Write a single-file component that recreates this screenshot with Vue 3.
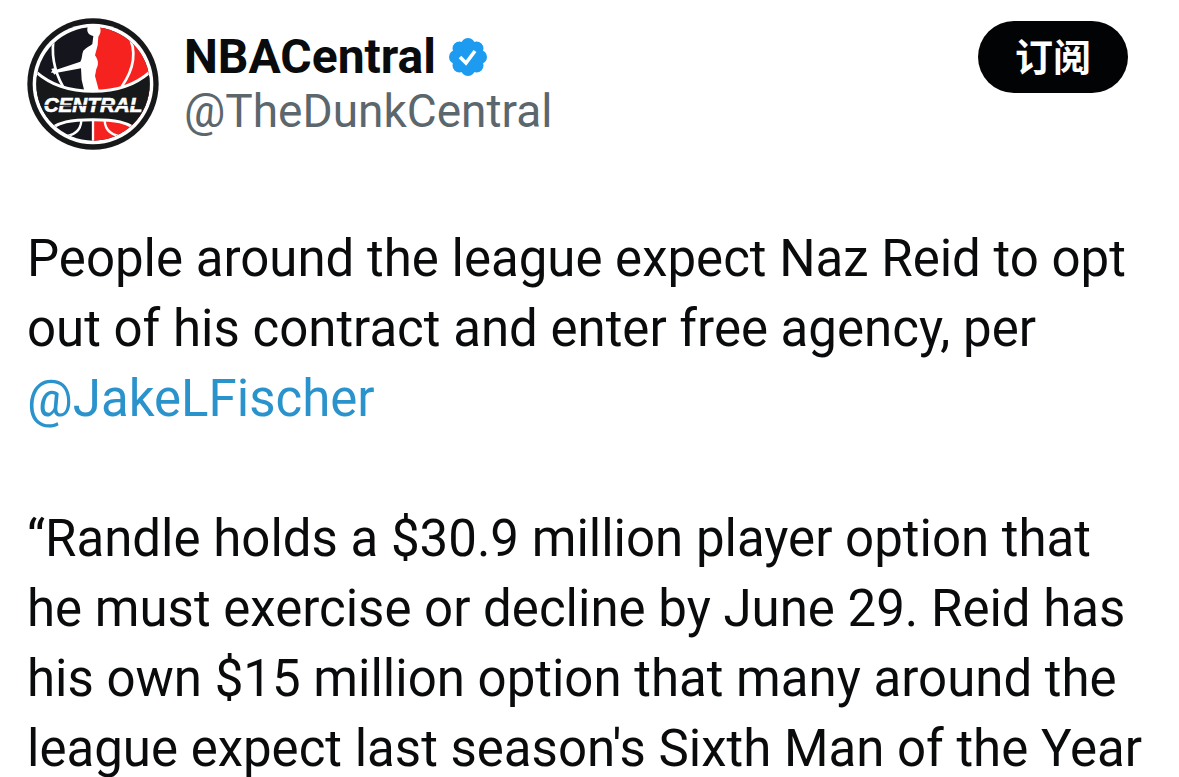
<template>
  <article class="post">
    <header class="post-header">
      <a class="avatar" href="#" :aria-label="author.name">
        <svg viewBox="0 0 396 396" aria-hidden="true">
          <defs>
            <clipPath id="ball">
              <circle cx="198" cy="198" r="170" />
            </clipPath>
          </defs>
          <circle cx="198" cy="198" r="197" fill="#17181a" />
          <circle cx="198" cy="198" r="181" fill="#fff" />
          <g clip-path="url(#ball)">
            <rect width="396" height="396" fill="#15161d" />
            <path d="M204 0H396V396H198V200Z" fill="#f5221f" />
            <!-- seams of the upper half -->
            <g fill="none" stroke="#fff" stroke-width="8">
              <path d="M82 50C72 100 78 152 108 206" />
              <path d="M304 50C330 100 322 152 284 206" />
            </g>
            <!-- name band -->
            <path
              d="M14 150C70 204 130 220 198 220S326 204 382 150L396 370C310 308 270 306 198 306S86 308 0 370Z"
              fill="#17181a"
            />
            <path
              d="M14 150C70 204 130 220 198 220S326 204 382 150"
              fill="none"
              stroke="#fff"
              stroke-width="9"
            />
            <path
              d="M50 350C90 308 140 305 198 305S306 308 346 350"
              fill="none"
              stroke="#fff"
              stroke-width="9"
            />
            <!-- seams of the lower half -->
            <g fill="none" stroke="#fff" stroke-width="7">
              <path d="M198 305V380" />
              <path d="M163 307C162 334 145 354 102 356" />
              <path d="M233 307C234 334 252 354 294 356" />
            </g>
          </g>
          <!-- player -->
          <path
            d="M182 28C186 22 214 20 219 28C223 38 220 48 214 56L212 82L204 112C214 126 216 140 208 153L204 174L216 219H172L164 186L162 151L90 164L82 170L78 164L72 164L76 157L72 153L80 151L88 155L160 131C166 122 164 108 169 98C178 88 190 84 196 78L199 54C184 52 178 40 182 28Z"
            fill="#fff"
          />
          <text x="198" y="283" class="avatar-text">CENTRAL</text>
          <path d="M50 262H346" stroke="#17181a" stroke-width="3" />
        </svg>
      </a>
      <div class="author">
        <div class="author-name">
          <a href="#">{{ author.name }}</a>
          <svg class="badge" viewBox="0 0 40 40" role="img" aria-label="Verified">
            <g fill="#1d9bf0">
              <circle cx="20" cy="20" r="16" />
              <circle
                v-for="n in 8"
                :key="n"
                cx="20"
                cy="8"
                r="7"
                :transform="`rotate(${n * 45} 20 20)`"
              />
            </g>
            <path
              d="M12 20L18 26L27 14"
              fill="none"
              stroke="#fff"
              stroke-width="3.6"
            />
          </svg>
        </div>
        <a class="author-handle" href="#">{{ author.handle }}</a>
      </div>
      <button class="subscribe" type="button">订阅</button>
    </header>

    <div class="post-body">
      <p>
        People around the league expect Naz Reid to opt<br />
        out of his contract and enter free agency, per<br />
        <a class="mention" href="#">@JakeLFischer</a>
      </p>
      <p>
        “Randle holds a $30.9 million player option that<br />
        he must exercise or decline by June 29. Reid has<br />
        his own $15 million option that many around the<br />
        league expect last season's Sixth Man of the Year
      </p>
    </div>
  </article>
</template>

<script setup>
const author = {
  name: 'NBACentral',
  handle: '@TheDunkCentral',
}
</script>

<style>
body {
  margin: 0;
  background: #fff;
}
</style>

<style scoped>
.post {
  padding: 18px 27px 0;
  color: #0a0b0c;
  font-family: Roboto, 'Liberation Sans', 'Noto Sans CJK SC', sans-serif;
}

.post a {
  color: inherit;
  text-decoration: none;
}

.post-header {
  display: flex;
  align-items: flex-start;
}

.avatar {
  flex: none;
  width: 132px;
  height: 132px;
  margin-right: 25px;
}

.avatar svg {
  display: block;
  width: 100%;
  height: 100%;
}

.avatar-text {
  fill: #fff;
  stroke: #fff;
  stroke-width: 2;
  font-family: 'Liberation Sans', sans-serif;
  font-size: 62px;
  font-style: italic;
  font-weight: bold;
  text-anchor: middle;
}

.author {
  flex: 1;
  padding-top: 12px;
}

.author-name {
  display: flex;
  align-items: center;
  gap: 12px;
  font-size: 48px;
  font-weight: 700;
  line-height: 54px;
}

.badge {
  width: 40px;
  height: 40px;
}

.post .author-handle {
  display: block;
  color: #5b666d;
  font-size: 46px;
  line-height: 54px;
}

.subscribe {
  width: 150px;
  height: 72px;
  margin: 3px 24px 0 0;
  padding: 0 0 4px;
  border: 0;
  border-radius: 36px;
  background: #020305;
  color: #fff;
  font-family: 'Noto Sans CJK SC', sans-serif;
  font-size: 38px;
  font-weight: 700;
  line-height: 68px;
}

.post-body {
  margin-top: 74px;
  font-size: 51px;
  line-height: 70px;
  white-space: nowrap;
}

.post-body p {
  margin: 0 0 70px;
}

.post-body p:last-child {
  margin-bottom: 0;
}

.post .mention {
  color: #2b93cc;
}
</style>
